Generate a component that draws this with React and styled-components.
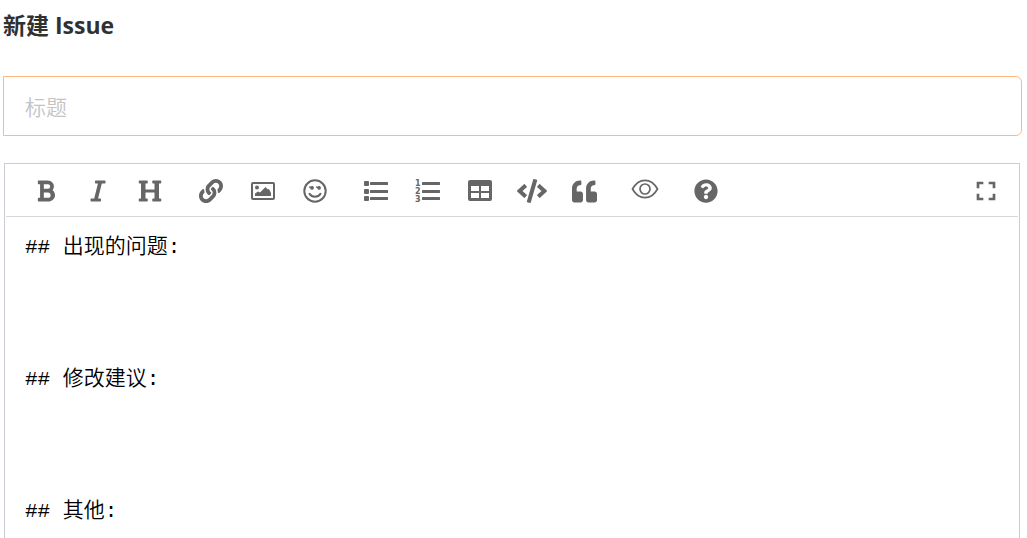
import React, { useState } from 'react';
import styled, { createGlobalStyle } from 'styled-components';
import {
  FaBold,
  FaItalic,
  FaHeading,
  FaLink,
  FaCode,
  FaQuoteLeft,
  FaQuestionCircle,
} from 'react-icons/fa';
import { MdFullscreen } from 'react-icons/md';

const GlobalStyle = createGlobalStyle`
  * {
    box-sizing: border-box;
  }

  html, body, #root {
    height: 100%;
  }

  body {
    margin: 0;
    background: white;
    overflow: hidden;
    font-family: "Open Sans", "Noto Sans CJK SC", sans-serif;
  }
`

const Page = styled.form`
  height: 100%;
  display: flex;
  flex-direction: column;
  padding: 7px 5px 0 3px;
`

const Heading = styled.h1`
  margin: 0 0 33px;
  font-size: 23px;
  line-height: 36px;
  font-weight: 700;
  color: #303133;
`

const TitleInput = styled.input`
  width: 100%;
  height: 60px;
  flex-shrink: 0;
  padding: 2px 21px 0;
  border: 1px solid #ffb980;
  border-radius: 0 6px 6px 0;
  outline: none;
  background: white;
  font-family: inherit;
  font-size: 21px;
  font-weight: 350;
  color: #303133;

  &::placeholder {
    color: #c4c4c4;
    opacity: 1;
  }
`

const Editor = styled.section`
  flex: 1;
  display: flex;
  flex-direction: column;
  margin: 27px 2px 0 1px;
  border: 1px solid #ccccd6;
  border-bottom: none;
`

const Toolbar = styled.div`
  display: flex;
  align-items: center;
  gap: 9px;
  height: 53px;
  flex-shrink: 0;
  margin: 0 1px;
  padding: 2px 6px 0 14px;
  border-bottom: 1px solid #d8d8dc;
`

const Group = styled.div`
  display: flex;
  margin-left: ${props => props.$end ? "auto" : "0"};
`

const ToolButton = styled.button`
  display: flex;
  align-items: center;
  justify-content: center;
  width: 52px;
  height: 50px;
  padding: 0;
  border: none;
  background: none;
  color: #666;
  font-size: ${props => props.$size || 24}px;
  cursor: pointer;
`

const Content = styled.textarea`
  flex: 1;
  width: 100%;
  padding: 14px 20px 0;
  border: none;
  outline: none;
  resize: none;
  overflow: hidden;
  background: white;
  font-family: "Liberation Mono", "Noto Sans CJK SC", monospace;
  font-size: 21px;
  font-weight: 350;
  line-height: 33px;
  color: black;
`

const Picture = () => (
  <svg width="26" height="24" viewBox="0 0 26 24" fill="currentColor">
    <rect x="2" y="4" width="22" height="16" rx="1" fill="none" stroke="currentColor" strokeWidth="2" />
    <circle cx="7" cy="8.500" r="2" />
    <path d="M5 17V14.500L8 12.500L10 13.500L15.500 8L18 10.500L19 10L21 14V17Z" />
  </svg>
)

const Smile = () => (
  <svg width="24" height="24" viewBox="0 0 24 24" fill="none" stroke="currentColor" strokeWidth="2" strokeLinecap="round">
    <circle cx="12" cy="12" r="10.700" />
    <path d="M6.500 14.800C8.800 18.800 15.200 18.800 17.500 14.800" />
    <path d="M5.800 8.800C5.900 7.300 7 6.800 7.700 7.600C8.500 6.500 10.900 7 10.900 8.800C10.900 10.200 9.900 10.800 8.900 10.800C7.700 10.800 7.100 9.900 7.200 8.800ZM12.800 8.800C12.900 7.300 14 6.800 14.700 7.600C15.500 6.500 17.900 7 17.900 8.800C17.900 10.200 16.900 10.800 15.900 10.800C14.700 10.800 14.100 9.900 14.200 8.800Z" fill="currentColor" stroke="none" />
  </svg>
)

const Bars = () => (
  <>
    <rect x="7" y="3" width="18" height="3" rx="0.5" />
    <rect x="7" y="11" width="18" height="3" rx="0.5" />
    <rect x="7" y="18" width="18" height="3" rx="0.5" />
  </>
)

const BulletList = () => (
  <svg width="26" height="24" viewBox="0 0 26 24" fill="currentColor">
    <rect x="1" y="2" width="5" height="5" rx="1" />
    <rect x="1" y="10" width="5" height="5" rx="1" />
    <rect x="1" y="17" width="5" height="5" rx="1" />
    <Bars />
  </svg>
)

const NumberList = () => (
  <svg width="26" height="24" viewBox="0 0 26 24" fill="currentColor" fontFamily="DejaVu Sans, sans-serif" fontSize="8" fontWeight="700">
    <text x="0" y="7">1</text>
    <text x="0" y="15">2</text>
    <text x="0" y="23">3</text>
    <Bars />
  </svg>
)

const Grid = () => (
  <svg width="26" height="24" viewBox="0 0 26 24" fill="currentColor" fillRule="evenodd">
    <path d="M3 1H23Q25 1 25 3V20Q25 22 23 22H3Q1 22 1 20V3Q1 1 3 1ZM4 7V12H12V7ZM14 7V12H22V7ZM4 14V19H12V14ZM14 14V19H22V14Z" />
  </svg>
)

const Eye = () => (
  <svg width="28" height="28" viewBox="0 0 28 28" fill="none" stroke="currentColor" strokeWidth="1.7">
    <path d="M1.500 12C4.500 6.500 8.800 3.300 14 3.300S23.500 6.500 26.500 12C23.500 17.500 19.200 20.700 14 20.700S4.500 17.500 1.500 12Z" />
    <circle cx="14" cy="12" r="5" />
  </svg>
)

const groups = [
  [
    { label: '粗体', icon: <FaBold /> },
    { label: '斜体', icon: <FaItalic /> },
    { label: '标题级别', icon: <FaHeading /> },
  ],
  [
    { label: '链接', icon: <FaLink /> },
    { label: '图片', icon: <Picture /> },
    { label: '表情', icon: <Smile /> },
  ],
  [
    { label: '无序列表', icon: <BulletList /> },
    { label: '有序列表', icon: <NumberList /> },
    { label: '表格', icon: <Grid /> },
    { label: '代码', icon: <FaCode />, size: 30 },
    { label: '引用', icon: <FaQuoteLeft />, size: 25 },
  ],
  [{ label: '预览', icon: <Eye /> }],
  [{ label: '帮助', icon: <FaQuestionCircle /> }],
]

const template = '## 出现的问题:\n\n\n\n## 修改建议:\n\n\n\n## 其他:\n'

const App = () => {
  const [title, setTitle] = useState('');
  const [content, setContent] = useState(template);

  return (
    <Page onSubmit={e => e.preventDefault()}>
      <GlobalStyle />
      <Heading>新建 Issue</Heading>
      <TitleInput
        aria-label="标题"
        placeholder="标题"
        value={title}
        onChange={e => setTitle(e.target.value)}
      />
      <Editor>
        <Toolbar>
          { groups.map((group, index) => (
            <Group key={index}>
              { group.map(item => (
                <ToolButton type="button" aria-label={item.label} $size={item.size} key={item.label}>
                  {item.icon}
                </ToolButton>
              ))}
            </Group>
          ))}
          <Group $end>
            <ToolButton type="button" aria-label="全屏" $size={32}><MdFullscreen /></ToolButton>
          </Group>
        </Toolbar>
        <Content
          aria-label="内容"
          spellCheck={false}
          value={content}
          onChange={e => setContent(e.target.value)}
        />
      </Editor>
    </Page>
  )
}

export default App;
